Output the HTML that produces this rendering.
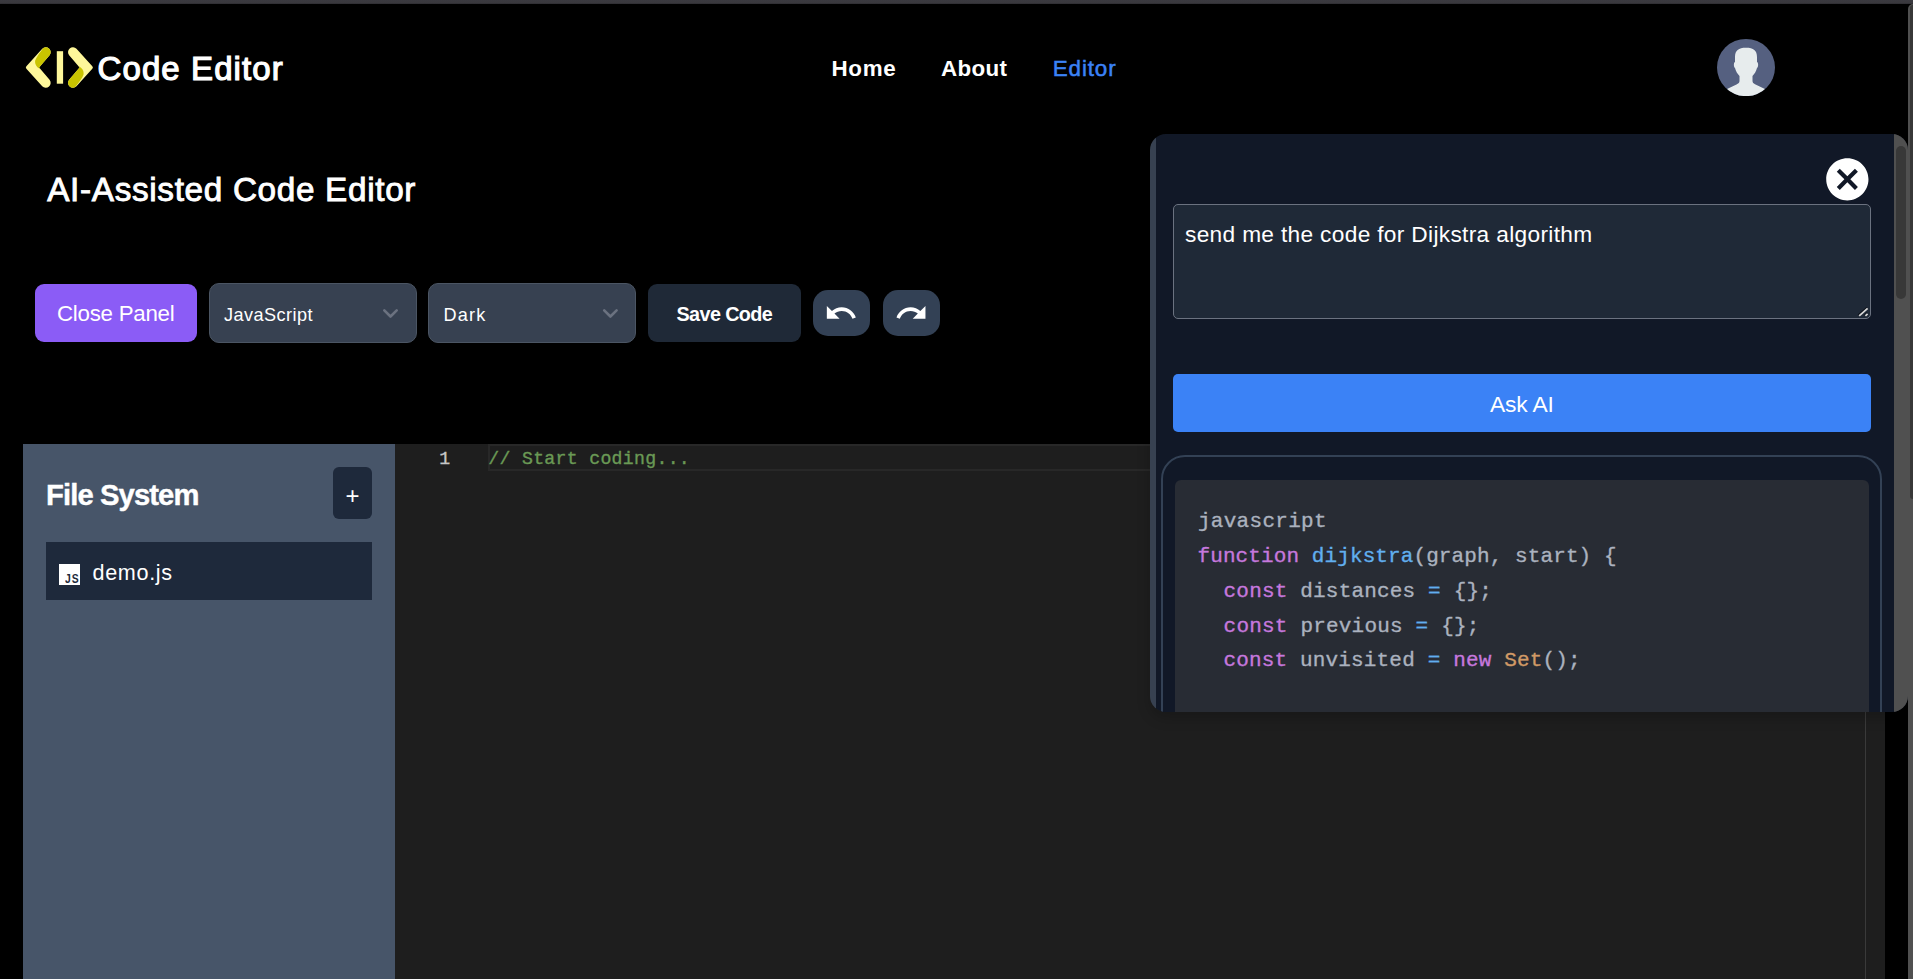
<!DOCTYPE html>
<html lang="en">
<head>
<meta charset="utf-8">
<title>Code Editor</title>
<style>
*{box-sizing:border-box;margin:0;padding:0}
html,body{width:1913px;height:979px;overflow:hidden;background:#000}
body{position:relative;font-family:"Liberation Sans",sans-serif;color:#fff}
.t{position:absolute;white-space:pre;line-height:1;display:block}
.abs{position:absolute}
.mono{font-family:"Liberation Mono","DejaVu Sans Mono",monospace;-webkit-text-stroke:.35px currentColor}
#topbar{left:0;top:0;width:1913px;height:4px;background:linear-gradient(#3b3a40 0,#39383d 70%,#2c2b30 100%)}
#pgtrack{left:1908px;top:4px;width:5px;height:975px;background:#505050;border-top-left-radius:5px}
#pgthumb{left:1910px;top:5px;width:3px;height:494px;background:#383838;border-radius:3px 0 0 3px}
#sidebar{left:23px;top:444px;width:372px;height:535px;background:#475569}
#plus{left:333px;top:467px;width:39px;height:52px;background:#1e293b;border-radius:6px}
#filerow{left:46px;top:542px;width:326px;height:58px;background:#1e293b}
#jsicon{left:59.300px;top:564.300px;width:20.600px;height:20.500px;background:#fff}
#editor{left:395px;top:444px;width:1490px;height:535px;background:#1e1e1e}
#curline{left:488px;top:444px;width:1377px;height:27px;border:2px solid #282828}
#ruler{left:1865px;top:444px;width:1px;height:535px;background:#3a3a3a}
#btn-close{left:35px;top:284px;width:162px;height:58px;background:#8b5cf6;border-radius:9px}
.sel{top:283px;width:208px;height:60px;background:#374151;border:1px solid #4b5563;border-radius:10px}
#btn-save{left:648px;top:284px;width:153px;height:58px;background:#1f2937;border-radius:9px}
.ico{top:290px;width:57px;height:46px;background:#334155;border-radius:15px}
#panel{left:1150px;top:134px;width:758px;height:578px;background:linear-gradient(90deg,#374151 0,#374151 6px,#111827 6px);border-radius:16px;overflow:hidden;box-shadow:0 6px 14px rgba(0,0,0,.2)}
#ptrack{left:744px;top:0;width:14px;height:578px;background:#505050}
#pthumb{left:746px;top:12px;width:10px;height:153px;background:#383838;border-radius:5px}
#ta{left:1173px;top:204px;width:698px;height:115px;background:#1f2937;border:1px solid #6b7280;border-radius:5px}
#ask{left:1173px;top:374px;width:698px;height:58px;background:#3b82f6;border-radius:5px}
#resp{left:11px;top:321px;width:721px;height:300px;border:2px solid #334155;border-radius:24px;background:#111827}
#code{left:25px;top:346px;width:694px;height:260px;background:#282c34;border-radius:6px}
.k{color:#c678dd}.f{color:#61afef}.o{color:#61afef}.c{color:#d19a66}.p{color:#abb2bf}
</style>
</head>
<body>
<div id="topbar" class="abs"></div>

<!-- header -->
<svg class="abs" style="left:20px;top:40px" width="80" height="56" viewBox="20 40 80 56">
  <defs><clipPath id="chv"><path d="M26.39,66.15 L42.22,48.77 A4.9,4.9 0 0 1 49.58,55.23 L39.10,67.50 L49.58,79.77 A4.9,4.9 0 0 1 42.22,86.23 L26.39,68.85 Q25.20,67.50 26.39,66.15 Z"/></clipPath></defs>
  <g id="lchev"><path d="M26.39,66.15 L42.22,48.77 A4.9,4.9 0 0 1 49.58,55.23 L39.10,67.50 L49.58,79.77 A4.9,4.9 0 0 1 42.22,86.23 L26.39,68.85 Q25.20,67.50 26.39,66.15 Z" fill="#fef79a"/><path d="M45.6,45 L38.8,54 Q35.8,58.6 35.2,60.6 Q34.4,65.3 39.3,68.6 L60,68.6 L60,40 Z" fill="#c9c400" clip-path="url(#chv)"/></g>
  <use href="#lchev" transform="rotate(180 59.35 67.5)"/>
  <rect x="56.8" y="51.2" width="6.3" height="32.5" fill="#fef79a"/>
</svg>
<span class="t" id="logo" style="left:97.60px;top:52.20px;font-size:33.00px;letter-spacing:1.080px;font-weight:400;-webkit-text-stroke:1.2px currentColor">Code Editor</span>
<span class="t" id="home" style="left:831.40px;top:58.20px;font-size:22.40px;letter-spacing:0.720px;font-weight:700">Home</span>
<span class="t" id="about" style="left:941.10px;top:58.40px;font-size:22.40px;letter-spacing:0.315px;font-weight:700">About</span>
<span class="t" id="edlink" style="left:1052.80px;top:58.40px;font-size:22.40px;letter-spacing:0.864px;font-weight:400;-webkit-text-stroke:0.5px currentColor;color:#3b82f6">Editor</span>
<svg class="abs" style="left:1717px;top:38px" width="58" height="58" viewBox="0 0 58 58">
  <defs><clipPath id="avc"><ellipse cx="29" cy="29.5" rx="29" ry="28.600"/></clipPath></defs>
  <ellipse cx="29" cy="29.5" rx="29" ry="28.600" fill="#556080"/>
  <g clip-path="url(#avc)" fill="#e7eced">
    <path d="M29 9.700c-7.500 0-11 2.600-11 9.300v5c-1.500 .5-1.500 5 0 6 .8 3 2.500 6 4.500 8v5c0 1.500-1 2.500-2.500 3.200L8 52v8h42v-8l-12-5.800c-1.500-.7-2.500-1.700-2.500-3.200v-5c2-2 3.700-5 4.500-8 1.500-1 1.500-5.500 0-6v-5c0-6.700-3.500-9.300-11-9.300z"/>
  </g>
</svg>

<span class="t" id="title" style="left:47.20px;top:172.70px;font-size:33.30px;letter-spacing:0.671px;font-weight:400;-webkit-text-stroke:0.9px currentColor">AI-Assisted Code Editor</span>

<!-- toolbar -->
<div id="btn-close" class="abs"></div>
<span class="t" id="closetxt" style="left:57.00px;top:303.30px;font-size:22.30px;letter-spacing:-0.252px;font-weight:400">Close Panel</span>
<div class="abs sel" style="left:209px"></div>
<span class="t" id="jstxt" style="left:224.00px;top:305.60px;font-size:18.10px;letter-spacing:0.460px;font-weight:400">JavaScript</span>
<div class="abs sel" style="left:428px"></div>
<span class="t" id="darktxt" style="left:443.50px;top:305.80px;font-size:18.10px;letter-spacing:1.200px;font-weight:400">Dark</span>
<svg class="abs" style="left:370px;top:300px" width="260" height="26" viewBox="370 300 260 26" fill="none" stroke="#6b7280" stroke-width="2.6" stroke-linecap="round" stroke-linejoin="round">
  <path d="M384.300 310.300l6.200 6.200 6.200-6.200"/>
  <path d="M604.200 310.300l6.200 6.200 6.200-6.200"/>
</svg>
<div id="btn-save" class="abs"></div>
<span class="t" id="savetxt" style="left:676.50px;top:305.35px;font-size:19.80px;letter-spacing:-0.607px;font-weight:700">Save Code</span>
<div class="abs ico" style="left:813px"></div>
<div class="abs ico" style="left:882.500px;width:57.500px"></div>
<svg class="abs" style="left:823.800px;top:296px" width="34" height="34" viewBox="0 0 24 24" fill="#fff"><path d="M12.500 8c-2.650 0-5.050.99-6.900 2.600L2 7v9h9l-3.620-3.620c1.390-1.160 3.160-1.880 5.120-1.880 3.540 0 6.550 2.310 7.600 5.500l2.370-.78C21.080 11.030 17.150 8 12.500 8z"/></svg>
<svg class="abs" style="left:893.700px;top:296px" width="34.600" height="34" viewBox="0 0 24 24" fill="#fff"><path d="M18.400 10.600C16.550 8.990 14.150 8 11.500 8c-4.650 0-8.580 3.030-9.960 7.220L3.900 16c1.050-3.190 4.050-5.500 7.600-5.500 1.950 0 3.730.72 5.120 1.880L13 16h9V7l-3.600 3.600z"/></svg>

<!-- sidebar -->
<div id="sidebar" class="abs"></div>
<span class="t" id="fstxt" style="left:46.00px;top:480.80px;font-size:29.20px;letter-spacing:-0.882px;font-weight:700;-webkit-text-stroke:0.4px currentColor">File System</span>
<div id="plus" class="abs"></div>
<span class="t" id="plustxt" style="left:345.50px;top:484.20px;font-size:23.95px;letter-spacing:0.000px;font-weight:400">+</span>
<div id="filerow" class="abs"></div>
<div id="jsicon" class="abs"></div>
<span class="t" id="jsico" style="left:65.30px;top:572.40px;font-size:13.00px;letter-spacing:1.260px;font-weight:700;color:#1e293b;transform:scaleX(.8);transform-origin:0 0">JS</span>
<span class="t" id="demotxt" style="left:92.50px;top:562.20px;font-size:21.60px;letter-spacing:0.660px;font-weight:400">demo.js</span>

<!-- editor -->
<div id="editor" class="abs"></div>
<div id="curline" class="abs"></div>
<div id="ruler" class="abs"></div>
<span class="t mono" id="lnum" style="left:439.20px;top:449.55px;font-size:18.20px;letter-spacing:0.000px;font-weight:400;color:#c6c6c6">1</span>
<span class="t mono" id="edcode" style="left:488.30px;top:449.55px;font-size:18.20px;letter-spacing:0.296px;font-weight:400;color:#6a9955">// Start coding...</span>

<!-- AI panel -->
<div id="panel" class="abs">
  <div id="resp" class="abs"></div>
  <div id="code" class="abs"></div>
  <div id="ptrack" class="abs"></div>
  <div id="pthumb" class="abs"></div>
</div>
<svg class="abs" style="left:1821.600px;top:154.400px" width="50.700" height="50.700" viewBox="0 0 24 24" fill="#fff"><path d="M12 2C6.470 2 2 6.470 2 12s4.470 10 10 10 10-4.470 10-10S17.530 2 12 2zm5 13.590L15.590 17 12 13.410 8.410 17 7 15.590 10.590 12 7 8.410 8.410 7 12 10.590 15.590 7 17 8.410 13.410 12 17 15.590z"/></svg>
<div id="ta" class="abs"></div>
<span class="t" id="tatxt" style="left:1185.00px;top:222.70px;font-size:22.70px;letter-spacing:0.327px;font-weight:400">send me the code for Dijkstra algorithm</span>
<svg class="abs" style="left:1857px;top:305px" width="12" height="12" viewBox="0 0 12 12" fill="none" stroke-linecap="butt"><path d="M1.300 10.100L9.900 2.500M7.600 10.200l2.600-2.400" stroke="#0b0f17" stroke-width="1.400"/><path d="M2.200 10.900L10.600 3.400M8.400 10.800l2.200-2" stroke="#d6d6d6" stroke-width="1.800"/></svg>
<div id="ask" class="abs"></div>
<span class="t" id="asktxt" style="left:1490.00px;top:392.90px;font-size:22.80px;letter-spacing:-0.144px;font-weight:400">Ask AI</span>
<span class="t mono p" id="c1" style="left:1197.90px;top:510.75px;font-size:21.00px;letter-spacing:0.300px;font-weight:400">javascript</span>
<span class="t mono p" id="c2" style="left:1197.50px;top:546.25px;font-size:21.00px;letter-spacing:0.101px;font-weight:400"><span class="k">function</span> <span class="f">dijkstra</span>(graph, start) {</span>
<span class="t mono p" id="c3" style="left:1198.00px;top:581.25px;font-size:21.00px;letter-spacing:0.180px;font-weight:400">  <span class="k">const</span> distances <span class="o">=</span> {};</span>
<span class="t mono p" id="c4" style="left:1198.00px;top:615.75px;font-size:21.00px;letter-spacing:0.197px;font-weight:400">  <span class="k">const</span> previous <span class="o">=</span> {};</span>
<span class="t mono p" id="c5" style="left:1198.00px;top:650.25px;font-size:21.00px;letter-spacing:0.155px;font-weight:400">  <span class="k">const</span> unvisited <span class="o">=</span> <span class="k">new</span> <span class="c">Set</span>();</span>

<div id="pgtrack" class="abs"></div>
<div id="pgthumb" class="abs"></div>
</body>
</html>
